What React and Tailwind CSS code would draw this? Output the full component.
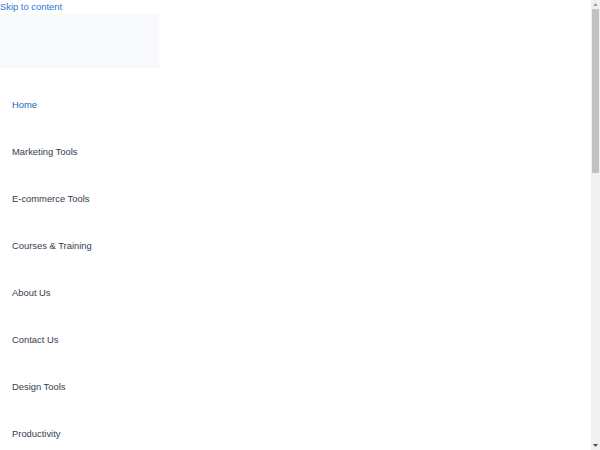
const menu = [
  'Home',
  'Marketing Tools',
  'E-commerce Tools',
  'Courses & Training',
  'About Us',
  'Contact Us',
  'Design Tools',
  'Productivity',
  'SEO Tools',
  'Analytics',
  'Blog',
  'Resources',
];

function Scrollbar() {
  return (
    <div className="fixed right-0 top-0 flex h-screen w-[9px] flex-col bg-[#f1f1f1]" aria-hidden="true">
      <div className="flex h-[9px] items-center justify-center">
        <svg width="5" height="3" viewBox="0 0 5 3">
          <path d="M2.5 0L5 3H0z" fill="#a3a3a3" />
        </svg>
      </div>
      <div className="mx-[1px] h-[164px] bg-[#c1c1c1]" />
      <div className="flex-1" />
      <div className="flex h-[9px] items-center justify-center">
        <svg width="5" height="3" viewBox="0 0 5 3">
          <path d="M0 0H5L2.5 3z" fill="#505050" />
        </svg>
      </div>
    </div>
  );
}

export default function App() {
  return (
    <div className="bg-white font-['Liberation_Sans',Arial,sans-serif]">
      <a href="#content" className="block h-[14px] text-[9.4px] leading-[14px] text-[#2a78d6]">
        Skip to content
      </a>

      <header>
        <div className="h-[54px] w-[159px] bg-[#f8f9fb]" />

        <nav className="pt-[13.5px]">
          <ul>
            {menu.map((item, i) => (
              <li key={item} className="flex h-[47px] items-center pl-3">
                <a
                  href="#"
                  className={`text-[9.4px] leading-none ${i === 0 ? 'text-[#1a68bb]' : 'text-[#333d4d]'}`}
                >
                  {item}
                </a>
              </li>
            ))}
          </ul>
        </nav>
      </header>

      <main id="content" className="h-[540px]" />

      <Scrollbar />
    </div>
  );
}
